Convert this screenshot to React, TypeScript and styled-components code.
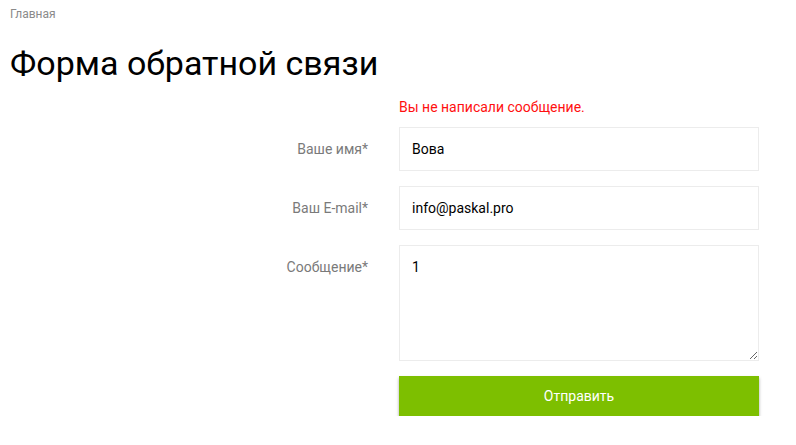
import React from 'react'
import styled, { createGlobalStyle } from 'styled-components'

const GlobalStyle = createGlobalStyle`
  html, body {
    margin: 0;
    padding: 0;
    background: #fff;
    font-family: Roboto, "Noto Sans", sans-serif;
  }
`

const Page = styled.div`
  padding: 6px 10px 0;
  width: 796px;
  box-sizing: border-box;
`

const Breadcrumb = styled.a`
  display: block;
  font-size: 12px;
  line-height: 16px;
  color: #8a8a8a;
  text-decoration: none;
`

const Title = styled.h1`
  margin: 19px 0 0;
  font-size: 34px;
  font-weight: 400;
  line-height: 44px;
  color: #000;
`

const Form = styled.form`
  display: grid;
  grid-template-columns: 358px 360px;
  column-gap: 31px;
  row-gap: 15px;
  margin-top: 13px;
`

const ErrorText = styled.div`
  grid-column: 2;
  font-size: 14px;
  line-height: 18px;
  color: #ff1010;
  margin-bottom: -4px;
`

const Label = styled.label`
  text-align: right;
  font-size: 14px;
  line-height: 18px;
  color: #7a7a7a;
  padding-top: 13px;
`

const Input = styled.input`
  box-sizing: border-box;
  width: 100%;
  height: 44px;
  border: 1px solid #ececec;
  padding: 0 12px;
  font-family: inherit;
  font-size: 14px;
  color: #000;
  outline: none;
`

const TextArea = styled.textarea`
  box-sizing: border-box;
  width: 100%;
  height: 116px;
  border: 1px solid #ececec;
  padding: 13px 12px;
  font-family: inherit;
  font-size: 14px;
  color: #000;
  outline: none;
  resize: both;
  display: block;
`

const Submit = styled.button`
  grid-column: 2;
  height: 40px;
  border: none;
  background: #7dbf00;
  color: #fff;
  font-family: inherit;
  font-size: 14px;
  font-weight: 400;
  box-shadow: 0 2px 3px rgba(0, 0, 0, 0.35);
  cursor: pointer;
`

export default function App() {
  return (
    <>
      <GlobalStyle />
      <Page>
        <Breadcrumb href="#">Главная</Breadcrumb>
        <Title>Форма обратной связи</Title>
        <Form onSubmit={(e) => e.preventDefault()}>
          <ErrorText>Вы не написали сообщение.</ErrorText>
          <Label>Ваше имя*</Label>
          <Input defaultValue="Вова" />
          <Label>Ваш E-mail*</Label>
          <Input defaultValue="info@paskal.pro" />
          <Label>Сообщение*</Label>
          <TextArea defaultValue="1" />
          <Submit type="submit">Отправить</Submit>
        </Form>
      </Page>
    </>
  )
}
